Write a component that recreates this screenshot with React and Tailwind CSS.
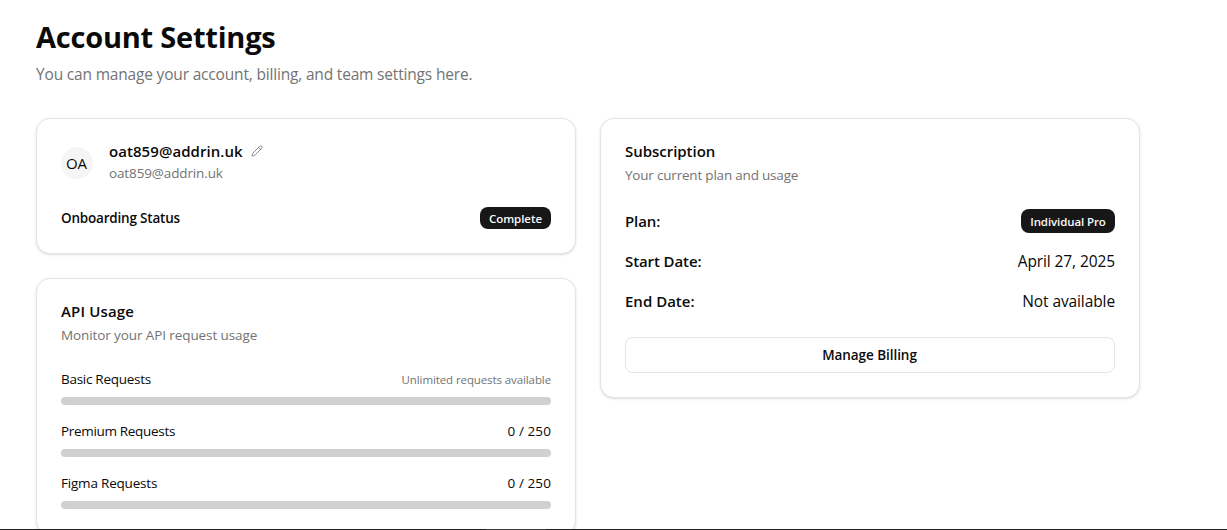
import { Pencil } from "lucide-react";

const card = "rounded-[14px] border border-[#e5e5e5] bg-white px-6 shadow-sm";

function Badge({ className, children }) {
  return (
    <span className={`flex items-center justify-center rounded-lg bg-[#171717] pt-0.5 text-[11.5px] font-semibold text-[#fafafa] ${className}`}>
      {children}
    </span>
  );
}

function CardHeading({ title, subtitle, titleClass, subtitleClass }) {
  return (
    <div>
      <h2 className={`text-[15px] font-semibold leading-6 ${titleClass}`}>{title}</h2>
      <p className={`text-[13.5px] leading-5 text-[#737373] mt-0.5 ${subtitleClass}`}>{subtitle}</p>
    </div>
  );
}

function Usage({ label, value, labelClass, valueClass }) {
  return (
    <div className="flex flex-col gap-2">
      <div className="flex h-5 items-center justify-between">
        <span className={`text-[13.5px] ${labelClass}`}>{label}</span>
        <span className={valueClass}>{value}</span>
      </div>
      <div className="h-2 rounded-full bg-[#d0d0d0]" />
    </div>
  );
}

function Detail({ label, labelClass, children }) {
  return (
    <div className="flex h-6 items-center justify-between">
      <span className={`text-[15px] font-semibold ${labelClass}`}>{label}</span>
      {children}
    </div>
  );
}

export default function App() {
  return (
    <div className="flex h-[530px] flex-col overflow-hidden whitespace-nowrap bg-white font-['Open_Sans','Noto_Sans',sans-serif] text-[#0a0a0a]">
      <main className="min-h-0 flex-1 overflow-hidden pl-9 pt-[19px]">
        <h1 className="text-[29px] font-bold leading-9 tracking-[-0.22px]">Account Settings</h1>
        <p className="mt-[7px] text-[15.5px] leading-6 tracking-[-0.18px] text-[#737373]">
          You can manage your account, billing, and team settings here.
        </p>
        <div className="mt-8 grid w-[1104px] grid-cols-2 items-start gap-6">
          <div className="flex flex-col gap-6">
            <section className={`h-[136px] pt-5 ${card}`}>
              <div className="flex items-center gap-4">
                <div className="mt-1 flex size-8 items-center justify-center rounded-full bg-[#f5f5f5] text-[15px]">
                  <span className="pr-px tracking-[-0.1px]">OA</span>
                </div>
                <div>
                  <div className="flex h-6 items-center gap-2">
                    <span className="text-[15px] font-semibold tracking-[0.06px]">oat859@addrin.uk</span>
                    <Pencil className="size-3 text-[#606060]" strokeWidth={1.5} />
                  </div>
                  <div className="text-[13.5px] leading-5 tracking-[-0.13px] text-[#737373]">oat859@addrin.uk</div>
                </div>
              </div>
              <div className="mt-6 flex h-[22px] items-center justify-between">
                <span className="text-[13.5px] font-semibold tracking-[-0.2px]">Onboarding Status</span>
                <Badge className="h-[22px] w-[71px] tracking-[-0.05px]">Complete</Badge>
              </div>
            </section>
            <section className={`h-[257px] pt-5 ${card}`}>
              <CardHeading title="API Usage" subtitle="Monitor your API request usage" titleClass="tracking-[0.15px]" subtitleClass="tracking-[-0.1px]" />
              <div className="mt-6 flex flex-col gap-4">
                <Usage label="Basic Requests" value="Unlimited requests available" labelClass="tracking-[-0.28px]" valueClass="pt-px text-[11.5px] tracking-[-0.1px] text-[#737373]" />
                <Usage label="Premium Requests" value="0 / 250" labelClass="tracking-[-0.32px]" valueClass="text-[13.5px] tracking-[0.1px]" />
                <Usage label="Figma Requests" value="0 / 250" labelClass="tracking-[-0.2px]" valueClass="text-[13.5px] tracking-[0.1px]" />
              </div>
            </section>
          </div>
          <section className={`h-[280px] pt-5 ${card}`}>
            <CardHeading title="Subscription" subtitle="Your current plan and usage" titleClass="tracking-[-0.03px]" subtitleClass="tracking-[-0.2px]" />
            <div className="mt-6 flex flex-col gap-4">
              <Detail label="Plan:" labelClass="tracking-[-0.1px]">
                <Badge className="h-6 w-[94px] tracking-[-0.1px]">Individual Pro</Badge>
              </Detail>
              <Detail label="Start Date:" labelClass="tracking-[-0.1px]">
                <span className="pt-0.5 text-[15.5px] tracking-[-0.1px]">April 27, 2025</span>
              </Detail>
              <Detail label="End Date:" labelClass="">
                <span className="pt-0.5 text-[15.5px] tracking-[-0.1px]">Not available</span>
              </Detail>
            </div>
            <button className="mt-6 h-9 w-full rounded-lg border border-[#e5e5e5] pr-px text-[13.5px] font-semibold tracking-[-0.06px]">
              Manage Billing
            </button>
          </section>
        </div>
      </main>
      <div className="h-px shrink-0 bg-[#202020] pl-[486px]">
        <div className="h-px w-[60px] bg-[#3c3c3c]" />
      </div>
    </div>
  );
}
